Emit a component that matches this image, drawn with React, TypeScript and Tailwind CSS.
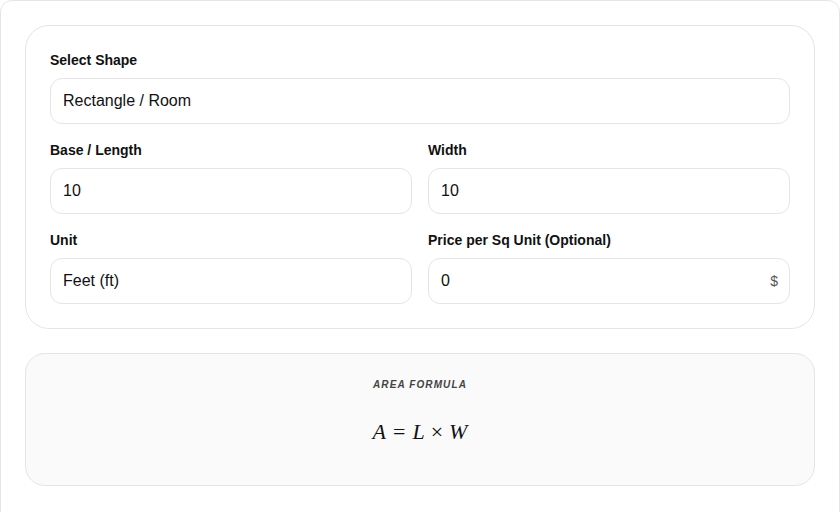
import { useState } from 'react';

const font = { fontFamily: '"Liberation Sans", Arial, sans-serif' };

function Field({
  label,
  value,
  onChange,
  suffix,
}: {
  label: string;
  value: string;
  onChange: (v: string) => void;
  suffix?: string;
}) {
  return (
    <div className="flex flex-col">
      <label className="text-[14px] leading-5 font-bold text-[#111] mb-2">{label}</label>
      <div className="relative">
        <input
          value={value}
          onChange={(e) => onChange(e.target.value)}
          className="w-full h-[46px] px-3 border border-[#e5e5e5] rounded-xl bg-white text-[16px] text-[#111] outline-none"
          style={font}
        />
        {suffix && (
          <span className="absolute right-3 top-1/2 -translate-y-1/2 text-[14px] text-[#555]">{suffix}</span>
        )}
      </div>
    </div>
  );
}

export default function App() {
  const [base, setBase] = useState('10');
  const [width, setWidth] = useState('10');
  const [price, setPrice] = useState('0');

  return (
    <div className="w-[840px] h-[512px] overflow-hidden bg-white" style={font}>
      <div className="border border-[#e5e5e5] rounded-xl p-6 min-h-[530px]">
        <div className="border border-[#e5e5e5] rounded-3xl bg-white p-6 flex flex-col gap-4">
          <div className="flex flex-col">
            <label className="text-[14px] leading-5 font-bold text-[#111] mb-2">Select Shape</label>
            <div className="w-full h-[46px] px-3 flex items-center border border-[#e5e5e5] rounded-xl bg-white text-[16px] text-[#111]">
              Rectangle / Room
            </div>
          </div>
          <div className="grid grid-cols-2 gap-4">
            <Field label="Base / Length" value={base} onChange={setBase} />
            <Field label="Width" value={width} onChange={setWidth} />
          </div>
          <div className="grid grid-cols-2 gap-4">
            <div className="flex flex-col">
              <label className="text-[14px] leading-5 font-bold text-[#111] mb-2">Unit</label>
              <div className="w-full h-[46px] px-3 flex items-center border border-[#e5e5e5] rounded-xl bg-white text-[16px] text-[#111]">
                Feet (ft)
              </div>
            </div>
            <Field label="Price per Sq Unit (Optional)" value={price} onChange={setPrice} suffix="$" />
          </div>
        </div>

        <div className="mt-6 h-[133px] border border-[#e5e5e5] rounded-[20px] bg-[#fafafa] flex flex-col items-center pt-6">
          <div className="text-[10px] leading-[14px] font-bold italic tracking-[0.11em] text-[#444]">AREA FORMULA</div>
          <div
            className="mt-[25px] text-[22px] leading-[30px] text-[#111]"
            style={{ fontFamily: '"Liberation Serif", "Times New Roman", serif' }}
          >
            <i>A</i>
            <span className="mx-[7px]">=</span>
            <i>L</i>
            <span className="mx-[6px]">×</span>
            <i>W</i>
          </div>
        </div>
      </div>
    </div>
  );
}
